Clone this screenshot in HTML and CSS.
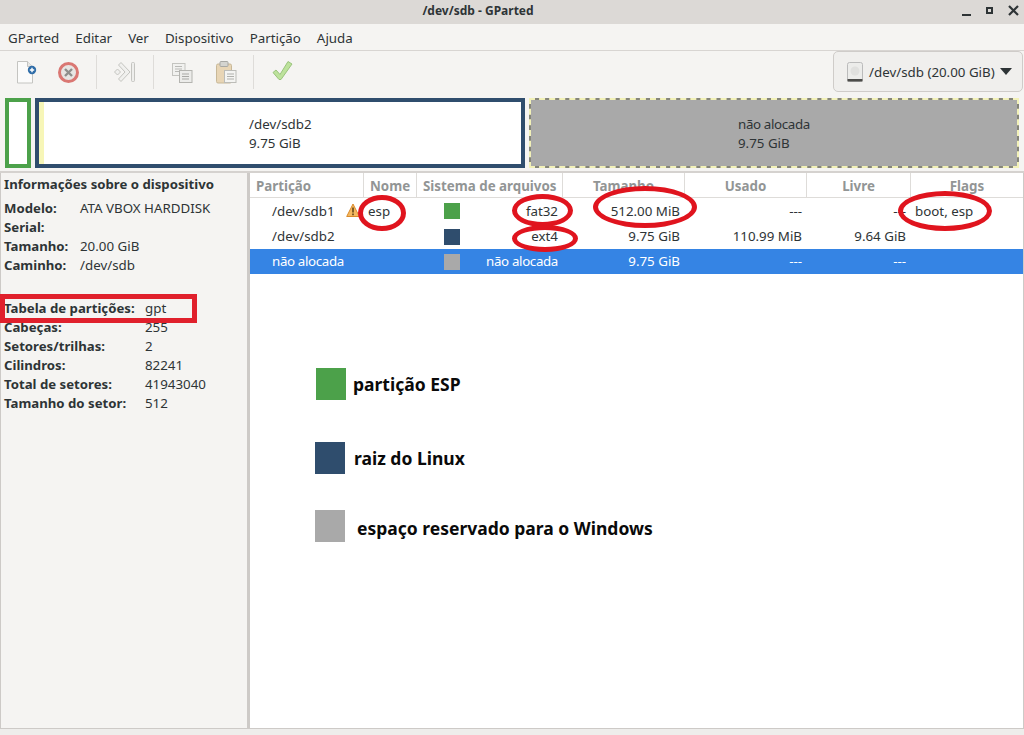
FILE: index.html
```html
<!DOCTYPE html>
<html lang="pt">
<head>
    <meta charset="UTF-8">
    <title>/dev/sdb - GParted</title>
    <link rel="stylesheet" href="styles.css">
</head>
<body>
    <div class="window">
        <div class="titlebar">
            <span class="title">/dev/sdb - GParted</span>
            <div class="win-buttons">
                <span class="win-min"></span>
                <span class="win-max"></span>
                <svg class="win-close" width="11" height="11" viewBox="0 0 11 11"><path d="M1 1l9 9M10 1l-9 9" stroke="#2e3436" stroke-width="2.2"/></svg>
            </div>
        </div>

        <div class="menubar">
            <span>GParted</span>
            <span>Editar</span>
            <span>Ver</span>
            <span>Dispositivo</span>
            <span>Partição</span>
            <span>Ajuda</span>
        </div>

        <div class="toolbar">
            <div class="tool tool-first">
                <svg width="24" height="24" viewBox="0 0 24 24">
                    <path d="M2.500 1.500h10l5 5v16.500h-15z" fill="#fbfbfa" stroke="#c4c4c1"/>
                    <path d="M12.500 1.500v5h5" fill="#e8e8e6" stroke="#c4c4c1"/>
                    <circle cx="17" cy="10" r="4.200" fill="#2f6da8"/>
                    <path d="M14.800 10h4.400M17 7.800v4.400" stroke="#fff" stroke-width="1.400"/>
                </svg>
            </div>
            <div class="tool">
                <svg width="24" height="24" viewBox="0 0 24 24">
                    <circle cx="12.500" cy="12.500" r="9" fill="#e7e5e3" stroke="#da7773" stroke-width="3"/>
                    <path d="M9 9l7 7M16 9l-7 7" stroke="#8f8f8c" stroke-width="2.400"/>
                </svg>
            </div>
            <div class="tool-sep"></div>
            <div class="tool">
                <svg width="24" height="24" viewBox="0 0 24 24">
                    <path d="M1.500 12l3-3 3 3-3 3z" fill="#f0f0ee" stroke="#c4c4c0"/>
                    <path d="M5.500 5L8 2.500 17 12l-9 9.500L5.500 19l6.500-7z" fill="#f0f0ee" stroke="#c4c4c0"/>
                    <rect x="18.500" y="2.500" width="3" height="19" rx="1" fill="#eeeeec" stroke="#c4c4c0"/>
                </svg>
            </div>
            <div class="tool-sep"></div>
            <div class="tool">
                <svg width="24" height="24" viewBox="0 0 24 24">
                    <rect x="2.500" y="3.500" width="12.500" height="12" fill="#f1f1ef" stroke="#c4c4c0"/>
                    <path d="M5 6.500h7M5 9h7M5 11.500h5" stroke="#b9b9b6"/>
                    <rect x="9.500" y="10.500" width="12.500" height="12" fill="#ececea" stroke="#b4b4b0"/>
                    <path d="M12 14h7M12 16.500h7M12 19h7" stroke="#a9a9a6"/>
                </svg>
            </div>
            <div class="tool tool-paste">
                <svg width="24" height="24" viewBox="0 0 24 24">
                    <rect x="2.500" y="4" width="15" height="19" rx="1.500" fill="#e8d5b5" stroke="#c8b898"/>
                    <rect x="6" y="1.500" width="8" height="5" rx="1" fill="#d4d4d0" stroke="#a8a8a4"/>
                    <rect x="10.500" y="10.500" width="11.500" height="12" fill="#f4f4f2" stroke="#bcbcb8"/>
                    <path d="M13 14h7M13 16.500h7M13 19h7" stroke="#b0b0ac"/>
                </svg>
            </div>
            <div class="tool-sep sep-last"></div>
            <div class="tool">
                <svg width="24" height="24" viewBox="0 0 24 24">
                    <path d="M3 12.500l3-2.500 4 4.500L18 1.500l4 2.500L11 19.500H9z" fill="#bde29c" stroke="#9ac47c"/>
                </svg>
            </div>
            <div class="device-select">
                <svg width="16" height="20" viewBox="0 0 16 20">
                    <rect x="0.500" y="0.500" width="15" height="19" rx="2" fill="#ececea" stroke="#bbb"/>
                    <rect x="0.500" y="17" width="15" height="2.500" fill="#4c4c4a"/>
                    <circle cx="8" cy="9" r="4.500" fill="#e0e0de"/>
                </svg>
                <span>/dev/sdb (20.00 GiB)</span>
                <i class="caret"></i>
            </div>
        </div>

        <div class="diskmap">
            <div class="part part-esp"></div>
            <div class="part part-root">
                <div class="used-strip"></div>
                <div class="part-label">/dev/sdb2<br>9.75 GiB</div>
            </div>
            <div class="part part-free">
                <div class="part-label"><span class="tight">não alocada</span><br>9.75 GiB</div>
            </div>
        </div>

        <div class="main">
            <aside class="info">
                <h4>Informações sobre o dispositivo</h4>
                <dl class="info-grid grid-a">
                    <dt>Modelo:</dt><dd>ATA VBOX HARDDISK</dd>
                    <dt>Serial:</dt><dd></dd>
                    <dt>Tamanho:</dt><dd>20.00 GiB</dd>
                    <dt>Caminho:</dt><dd>/dev/sdb</dd>
                </dl>
                <dl class="info-grid grid-b">
                    <dt>Tabela de partições:</dt><dd>gpt</dd>
                    <dt>Cabeças:</dt><dd>255</dd>
                    <dt>Setores/trilhas:</dt><dd>2</dd>
                    <dt>Cilindros:</dt><dd>82241</dd>
                    <dt>Total de setores:</dt><dd>41943040</dd>
                    <dt>Tamanho do setor:</dt><dd>512</dd>
                </dl>
                <span class="red-box"></span>
            </aside>

            <section class="list">
                <div class="row head">
                    <div class="c-part">Partição</div>
                    <div class="c-name">Nome</div>
                    <div class="c-fs">Sistema de arquivos</div>
                    <div class="c-size num-head">Tamanho</div>
                    <div class="c-used num-head">Usado</div>
                    <div class="c-free num-head">Livre</div>
                    <div class="c-flags num-head">Flags</div>
                </div>
                <div class="row row-first">
                    <div class="c-part indent">/dev/sdb1
                        <svg class="warn" width="14" height="15" viewBox="0 0 14 15">
                            <path d="M7 1l6.300 12.500H.7z" fill="#f4b860" stroke="#d98a2b"/>
                            <path d="M7 4.500v5M7 10.500v1.800" stroke="#5a3d10" stroke-width="1.500"/>
                        </svg>
                    </div>
                    <div class="c-name">esp</div>
                    <div class="c-fs fs"><i class="swatch green"></i><span>fat32</span></div>
                    <div class="c-size num">512.00 MiB</div>
                    <div class="c-used num">---</div>
                    <div class="c-free num">---</div>
                    <div class="c-flags">boot, esp</div>
                </div>
                <div class="row">
                    <div class="c-part indent">/dev/sdb2</div>
                    <div class="c-name"></div>
                    <div class="c-fs fs"><i class="swatch navy"></i><span>ext4</span></div>
                    <div class="c-size num">9.75 GiB</div>
                    <div class="c-used num">110.99 MiB</div>
                    <div class="c-free num">9.64 GiB</div>
                    <div class="c-flags"></div>
                </div>
                <div class="row selected">
                    <div class="c-part indent"><span class="tight">não alocada</span></div>
                    <div class="c-name"></div>
                    <div class="c-fs fs"><i class="swatch gray"></i><span class="tight">não alocada</span></div>
                    <div class="c-size num">9.75 GiB</div>
                    <div class="c-used num">---</div>
                    <div class="c-free num">---</div>
                    <div class="c-flags"></div>
                </div>

                <div class="legend">
                    <div class="legend-item item-esp"><i class="legend-box green"></i><span>partição ESP</span></div>
                    <div class="legend-item item-root"><i class="legend-box navy"></i><span>raiz do Linux</span></div>
                    <div class="legend-item item-win"><i class="legend-box gray"></i><span>espaço reservado para o Windows</span></div>
                </div>

                <span class="ring ring-esp"></span>
                <span class="ring ring-fat"></span>
                <span class="ring ring-ext"></span>
                <span class="ring ring-size"></span>
                <span class="ring ring-flags"></span>
            </section>
        </div>
        <div class="statusbar"></div>
    </div>
</body>
</html>
```

FILE: styles.css
```css
* {
    box-sizing: border-box;
}
body {
    margin: 0;
    font-family: "Noto Sans", sans-serif;
    font-size: 13.33px;
    color: #2e3436;
    background: #f5f4f2;
}
.window {
    width: 1024px;
    height: 735px;
    display: flex;
    flex-direction: column;
    overflow: hidden;
}
.tight {
    letter-spacing: -0.35px;
}
.titlebar {
    height: 24px;
    flex: none;
    background: #dcd9d6;
    display: flex;
    align-items: center;
    justify-content: center;
    padding: 0 68px 4px 0;
    position: relative;
}
.title {
    font-weight: 700;
    font-size: 12px;
    color: #2e3436;
}
.win-buttons {
    position: absolute;
    right: 5px;
    top: 5px;
    display: flex;
    align-items: center;
    gap: 15px;
}
.win-min {
    width: 9px;
    height: 2px;
    background: #2e3436;
    margin-top: 8px;
}
.win-max {
    width: 7px;
    height: 7px;
    border: 2px solid #2e3436;
}
.menubar {
    height: 27px;
    flex: none;
    display: flex;
    align-items: center;
    gap: 16px;
    padding: 1px 8px 0;
    border-bottom: 1px solid #d8d5d2;
}
.toolbar {
    height: 46px;
    flex: none;
    display: flex;
    align-items: center;
    gap: 16px;
    padding: 0 1px 5px 15px;
}
.tool {
    width: 24px;
    height: 24px;
    flex: none;
    margin-top: 1px;
}
.tool svg {
    display: block;
}
.tool-first {
    margin-right: 1px;
}
.tool-paste {
    margin-left: 4px;
}
.sep-last {
    margin-left: -1px;
}
.tool-sep {
    width: 1px;
    height: 34px;
    flex: none;
    margin-top: 1px;
    background: #dedcd9;
}
.device-select {
    margin-left: auto;
    width: 190px;
    height: 41px;
    border: 1px solid #cfccc9;
    border-radius: 5px;
    background: #f0efed;
    display: flex;
    align-items: center;
    padding-left: 13px;
    gap: 6px;
}
.caret {
    width: 0;
    height: 0;
    margin-left: -1px;
    border-left: 6px solid transparent;
    border-right: 6px solid transparent;
    border-top: 7px solid #2e3436;
}
.diskmap {
    height: 76px;
    flex: none;
    display: flex;
    gap: 4px;
    padding: 1px 5px 0;
    border-bottom: 2px solid #d5d2cf;
}
.part {
    background: #fff;
    display: flex;
    height: 70px;
    position: relative;
}
.part-esp {
    width: 26px;
    border: 4px solid #4ca14a;
}
.part-root {
    width: 490px;
    border: 4px solid #2f4d6d;
}
.used-strip {
    width: 5px;
    background: #f7f6b8;
}
.part-free {
    width: 490px;
    background: linear-gradient(#a9a9a9, #a9a9a9) padding-box, #85857a border-box;
    border: 2px dashed #f2f1b8;
}
.part-label {
    position: absolute;
    line-height: 19px;
    white-space: nowrap;
}
.part-root .part-label {
    left: 210px;
    top: 13px;
}
.part-free .part-label {
    left: 207px;
    top: 15px;
}
.main {
    flex: 1;
    display: flex;
    min-height: 0;
}
.info {
    width: 250px;
    flex: none;
    padding: 2px 0 0 3px;
    border-left: 1px solid #cdcac7;
    border-right: 3px solid #cdcac7;
    border-bottom: 1px solid #cdcac7;
    position: relative;
}
.info h4 {
    margin: 0 0 5px;
    font-size: 13.2px;
    line-height: 19px;
    font-weight: 700;
}
.info-grid {
    margin: 0;
    display: grid;
    grid-auto-rows: 19px;
    line-height: 19px;
    align-items: center;
}
.info-grid dt {
    font-size: 13.2px;
    font-weight: 700;
    white-space: nowrap;
}
.info-grid dd {
    margin: 0;
    white-space: nowrap;
}
.grid-a {
    grid-template-columns: 76px 1fr;
}
.grid-b {
    grid-template-columns: 141px 1fr;
    margin-top: 24px;
}
.red-box {
    position: absolute;
    left: -1px;
    top: 121px;
    width: 197px;
    height: 29px;
    border: 5px solid #e0202c;
}
.list {
    flex: 1;
    background: #fff;
    position: relative;
    border-bottom: 1px solid #cdcac7;
    border-right: 1px solid #cdcac7;
}
.row {
    display: flex;
    height: 25px;
    line-height: 25px;
    white-space: nowrap;
}
.row-first {
    height: 26px;
    line-height: 26px;
}
.row.head {
    height: 25px;
    line-height: 26px;
    font-weight: 700;
    color: #929595;
    border-bottom: 1px solid #dedcd9;
}
.row.head > div {
    border-right: 1px solid #dedcd9;
    padding: 0 6px;
}
.row.head > div:last-child {
    border-right: none;
}
.row.selected {
    background: #3584e4;
    color: #fff;
}
.c-part {
    width: 114px;
    flex: none;
    position: relative;
}
.indent {
    padding-left: 22px;
}
.warn {
    position: absolute;
    left: 96px;
    top: 5px;
}
.c-name {
    width: 53px;
    flex: none;
    padding: 0 5px 0 4px;
}
.c-fs {
    width: 146px;
    flex: none;
}
.fs {
    display: flex;
    justify-content: space-between;
    align-items: center;
    padding: 0 5px 0 27px;
}
.c-size {
    width: 122px;
    flex: none;
}
.c-used {
    width: 122px;
    flex: none;
}
.c-free {
    width: 104px;
    flex: none;
}
.c-flags {
    flex: 1;
    padding-left: 4px;
}
.num {
    text-align: right;
    padding-right: 5px;
}
.num-head {
    text-align: center;
}
.swatch {
    width: 16px;
    height: 16px;
    flex: none;
}
.green {
    background: #4ca14a;
}
.navy {
    background: #2f4d6d;
}
.gray {
    background: #a9a9a9;
}
.legend {
    position: absolute;
    left: 65px;
    top: 195px;
}
.legend-item {
    display: flex;
    align-items: center;
    font-size: 17.5px;
    font-weight: 700;
    color: #0a0a0a;
    height: 32px;
}
.legend-box {
    width: 30px;
    height: 32px;
    flex: none;
}
.item-esp {
    margin-left: 1px;
    gap: 7px;
}
.item-root {
    margin-top: 42px;
    gap: 9px;
}
.item-win {
    margin-top: 36px;
    gap: 12px;
}
.item-win span {
    margin-top: 4px;
}
.ring {
    position: absolute;
    border: 5px solid #e0141e;
    border-radius: 50%;
}
.ring-esp {
    left: 108px;
    top: 22px;
    width: 48px;
    height: 36px;
}
.ring-fat {
    left: 262px;
    top: 21px;
    width: 61px;
    height: 33px;
}
.ring-ext {
    left: 262px;
    top: 52px;
    width: 66px;
    height: 27px;
}
.ring-size {
    left: 343px;
    top: 13px;
    width: 104px;
    height: 42px;
}
.ring-flags {
    left: 648px;
    top: 18px;
    width: 94px;
    height: 40px;
}
.statusbar {
    height: 6px;
    flex: none;
    background: #eeedeb;
}
```
